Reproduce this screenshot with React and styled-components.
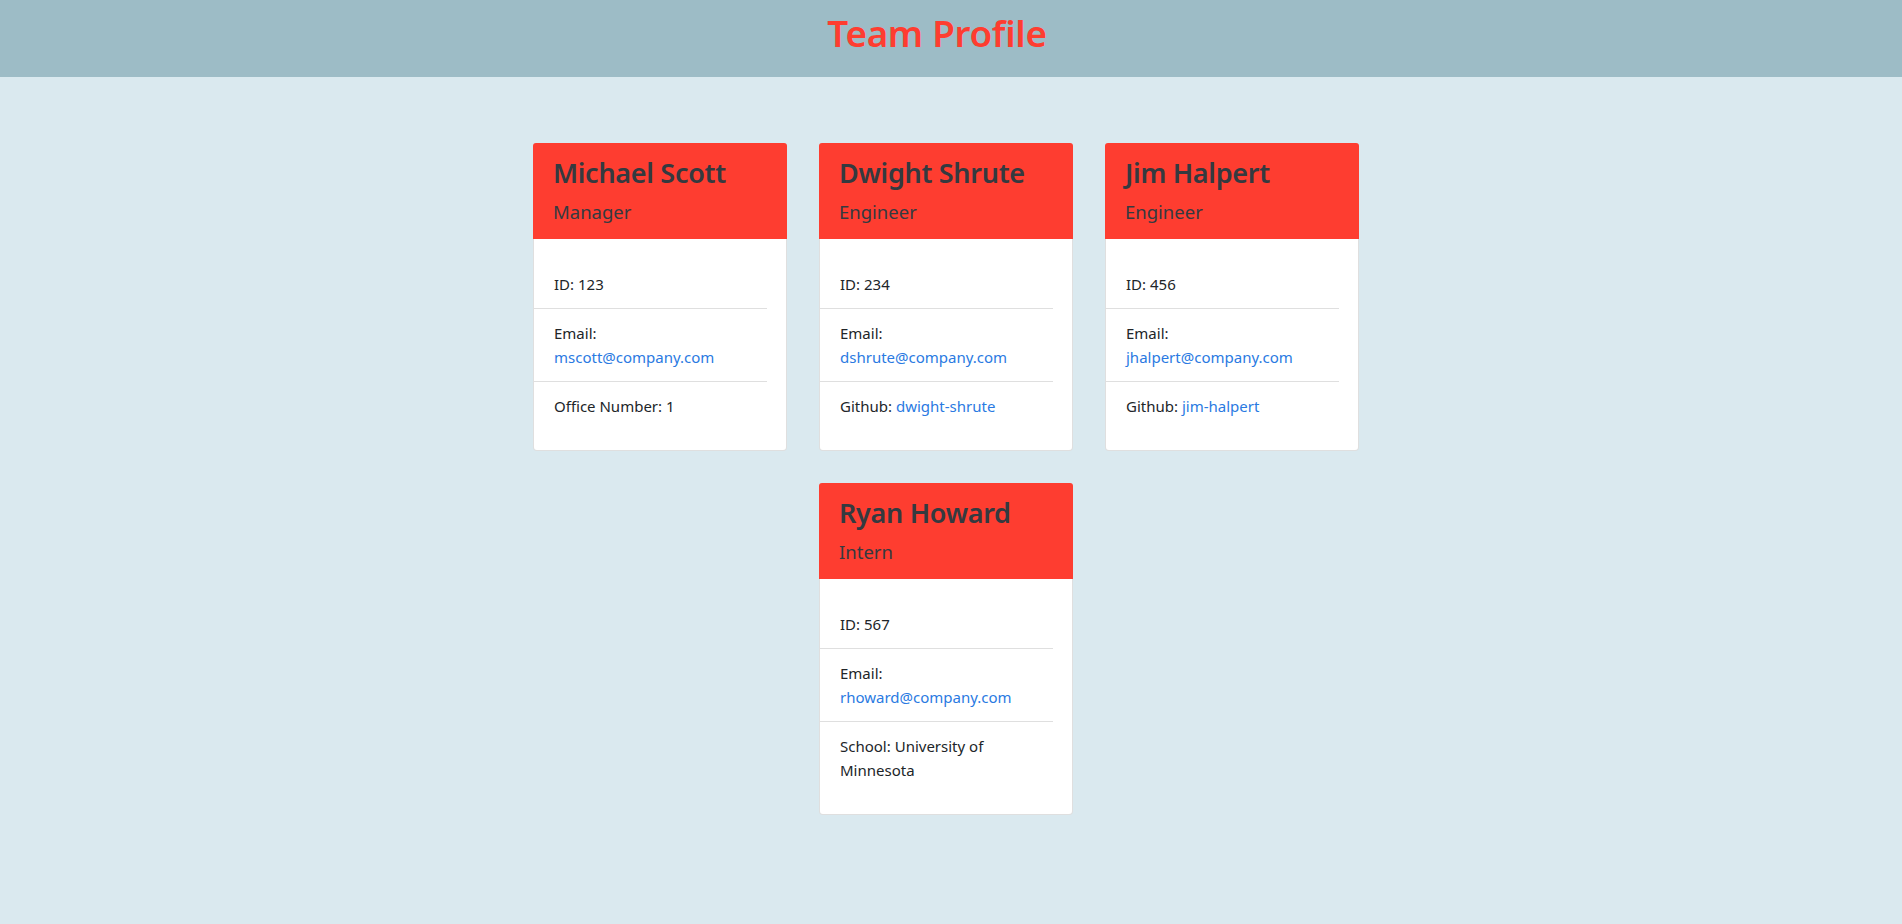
import React from "react";
import styled, { createGlobalStyle } from "styled-components";

const Global = createGlobalStyle`
  html, body { margin: 0; padding: 0; }
  body {
    background: #dae9ef;
    font-family: "Noto Sans", "Open Sans", sans-serif;
    color: #212529;
    font-size: 16px;
    line-height: 1.5;
  }
  * { box-sizing: border-box; }
`;

const Page = styled.div`
  min-height: 924px;
  background: #dae9ef;
`;

const Header = styled.header`
  height: 77px;
  background: #9dbcc6;
  display: flex;
  justify-content: center;
  align-items: flex-start;
  padding-right: 28px;
`;

const Title = styled.h1`
  margin: 9px 0 0;
  font-size: 36.8px;
  font-weight: 600;
  line-height: 48px;
  color: #fe3d30;
  letter-spacing: -0.3px;
`;

const Grid = styled.main`
  display: flex;
  flex-wrap: wrap;
  justify-content: center;
  gap: 32px;
  width: 826px;
  margin: 66px auto 0;
  position: relative;
  left: -5px;
`;

const Card = styled.section`
  width: 254px;
  background: #fff;
  border: 1px solid rgba(0, 0, 0, 0.125);
  border-radius: 4px;
  align-self: flex-start;
`;

const CardHeader = styled.div`
  background: #fe3d30;
  border-radius: 3px 3px 0 0;
  padding: 13px 20px 13px;
  margin: -1px -1px 0;
  color: #343a40;
`;

const Name = styled.h3`
  margin: 0 0 11px;
  font-size: 27px;
  font-weight: 600;
  line-height: 33px;
  letter-spacing: -0.3px;
`;

const Role = styled.h5`
  margin: 0 0 2px;
  font-size: 18.5px;
  font-weight: 400;
  line-height: 24px;
`;

const Body = styled.div`
  padding: 21px 19px 20px 0;
`;

const List = styled.ul`
  list-style: none;
  margin: 0;
  padding: 0;
`;

const Item = styled.li`
  padding: 12px 20px;
  font-size: 15px;
  line-height: 24px;
  border-bottom: 1px solid rgba(0, 0, 0, 0.125);
  &:last-child { border-bottom: 0; }
`;

const Link = styled.a`
  color: #2a7ae2;
  text-decoration: none;
`;

const team = [
  { name: "Michael Scott", role: "Manager", id: 123, email: "mscott@company.com", extra: { label: "Office Number", value: "1" } },
  { name: "Dwight Shrute", role: "Engineer", id: 234, email: "dshrute@company.com", extra: { label: "Github", value: "dwight-shrute", link: true } },
  { name: "Jim Halpert", role: "Engineer", id: 456, email: "jhalpert@company.com", extra: { label: "Github", value: "jim-halpert", link: true } },
  { name: "Ryan Howard", role: "Intern", id: 567, email: "rhoward@company.com", extra: { label: "School", value: "University of Minnesota" } },
];

function Member({ m }) {
  return (
    <Card>
      <CardHeader>
        <Name>{m.name}</Name>
        <Role>{m.role}</Role>
      </CardHeader>
      <Body>
        <List>
          <Item>ID: {m.id}</Item>
          <Item>
            Email:
            <br />
            <Link href={`mailto:${m.email}`}>{m.email}</Link>
          </Item>
          <Item>
            {m.extra.label}:{" "}
            {m.extra.link ? (
              <Link href={`https://github.com/${m.extra.value}`}>{m.extra.value}</Link>
            ) : (
              m.extra.value
            )}
          </Item>
        </List>
      </Body>
    </Card>
  );
}

export default function App() {
  return (
    <Page>
      <Global />
      <Header>
        <Title>Team Profile</Title>
      </Header>
      <Grid>
        {team.map((m) => (
          <Member key={m.id} m={m} />
        ))}
      </Grid>
    </Page>
  );
}
